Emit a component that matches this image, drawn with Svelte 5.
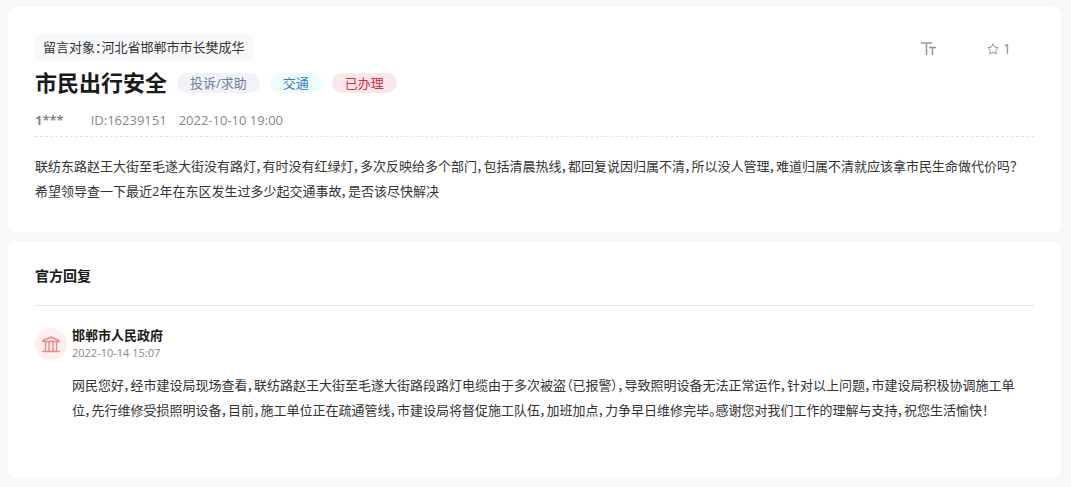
<script>
  const message = {
    target: '河北省邯郸市市长樊成华',
    title: '市民出行安全',
    author: '1***',
    id: '16239151',
    time: '2022-10-10 19:00',
    stars: 1,
    tags: [
      { name: '投诉/求助', type: 'kind' },
      { name: '交通', type: 'field' },
      { name: '已办理', type: 'state' }
    ],
    content: [
      '联纺东路赵王大街至毛遂大街没有路灯，有时没有红绿灯，多次反映给多个部门，包括清晨热线，都回复说因归属不清，所以没人管理，难道归属不清就应该拿市民生命做代价吗？',
      '希望领导查一下最近2年在东区发生过多少起交通事故，是否该尽快解决'
    ]
  };

  const reply = {
    name: '邯郸市人民政府',
    time: '2022-10-14 15:07',
    content: [
      '网民您好，经市建设局现场查看，联纺路赵王大街至毛遂大街路段路灯电缆由于多次被盗（已报警），导致照明设备无法正常运作，针对以上问题，市建设局积极协调施工单',
      '位，先行维修受损照明设备，目前，施工单位正在疏通管线，市建设局将督促施工队伍，加班加点，力争早日维修完毕。感谢您对我们工作的理解与支持，祝您生活愉快！'
    ]
  };
</script>

<main>
  <article class="card">
    <div class="top">
      <p class="target">留言对象：{message.target}</p>
      <div class="actions">
        <button aria-label="字体大小">
          <svg width="15" height="14" viewBox="0 0 15 14" stroke-width="1.5">
            <path d="M0 1H11M5.500 1V13M8 5.500H15M11.500 5.500V13" />
          </svg>
        </button>
        <button aria-label="收藏">
          <svg width="12" height="12" viewBox="0 0 12 12">
            <path
              d="M6 .8L7.600 4.100L11.300 4.600L8.700 7.200L9.300 11L6 9.200L2.700 11L3.300 7.200L.7 4.600L4.400 4.100Z" />
          </svg>
          <span>{message.stars}</span>
        </button>
      </div>
    </div>
    <div class="heading">
      <h1>{message.title}</h1>
      {#each message.tags as tag}
        <span class="tag {tag.type}">{tag.name}</span>
      {/each}
    </div>
    <div class="meta">
      <b>{message.author}</b>
      <span class="id">ID:{message.id}</span>
      <time>{message.time}</time>
    </div>
    <div class="content">
      {#each message.content as line}
        <p>{line}</p>
      {/each}
    </div>
  </article>

  <section class="card reply">
    <h2>官方回复</h2>
    <div class="reply-item">
      <div class="avatar">
        <svg width="18" height="17" viewBox="0 0 18 17" stroke-width="1.4">
          <path d="M1 4.500L9 1L17 4.500V5.500H1ZM3.500 6V15M7 6V15M11 6V15M14.500 6V15M0 15.500H18" />
        </svg>
      </div>
      <div class="reply-body">
        <h3>{reply.name}</h3>
        <time>{reply.time}</time>
        <div class="content">
          {#each reply.content as line}
            <p>{line}</p>
          {/each}
        </div>
      </div>
    </div>
  </section>
</main>

<style>
  :global(body) {
    background: #f7f8fa;
  }

  main {
    display: grid;
    gap: 9px;
    padding: 7px 10px 9px 8px;
    font-family: 'Open Sans', 'Noto Sans CJK SC', sans-serif;
    font-size: 13px;
    font-feature-settings: 'palt';
    color: #333;
  }

  h1,
  h2,
  h3,
  p {
    margin: 0;
  }

  .card {
    padding: 27px;
    border-radius: 8px;
    background: #fff;
  }

  .top {
    display: flex;
    justify-content: space-between;
  }

  .target {
    padding: 0 8px;
    border-radius: 2px;
    background: #f7f8fa;
    line-height: 27px;
  }

  .actions {
    display: flex;
    align-items: center;
    gap: 51px;
    padding: 3px 23px 0 0;
  }

  button {
    display: flex;
    align-items: center;
    gap: 4px;
    padding: 0;
    border: 0;
    background: none;
    color: #888;
    font: inherit;
    font-size: 14px;
    line-height: 20px;
    cursor: pointer;
  }

  svg {
    fill: none;
    stroke: #8f98a3;
  }

  .heading {
    display: flex;
    align-items: center;
    gap: 10px;
    height: 44px;
  }

  h1 {
    padding-bottom: 2px;
    font-size: 22px;
    line-height: 42px;
    color: #1a1a1a;
  }

  .tag {
    padding: 0 13px;
    border-radius: 10px;
    line-height: 20px;
  }

  .kind {
    background: #f0f3fa;
    color: #6f7f99;
  }

  .field {
    background: #edfdfb;
    color: #3b76c4;
  }

  .state {
    background: #fbe8eb;
    color: #d9283f;
  }

  .meta {
    display: flex;
    gap: 12px;
    border-bottom: 1px dashed #e3e3e3;
    line-height: 31px;
    color: #888;
  }

  .id {
    margin-left: 15px;
  }

  .content {
    line-height: 25px;
  }

  .card > .content {
    padding: 17px 0 1px;
  }

  .reply {
    padding: 21px 27px 54px;
  }

  h2 {
    padding-bottom: 15px;
    border-bottom: 1px solid #e3e3e3;
    font-size: 14px;
    line-height: 28px;
    color: #1a1a1a;
  }

  .reply-item {
    display: flex;
    gap: 5px;
    padding-top: 20px;
  }

  .avatar {
    display: flex;
    flex-shrink: 0;
    align-items: center;
    justify-content: center;
    width: 32px;
    height: 32px;
    margin-top: 2px;
    border-radius: 50%;
    background: #ffeeee;
  }

  .avatar svg {
    stroke: #e88a8a;
  }

  h3 {
    font-size: 13px;
    line-height: 18px;
    color: #1a1a1a;
  }

  .reply time {
    display: block;
    font-size: 11px;
    line-height: 18px;
    color: #888;
  }

  .reply .content {
    padding: 11px 0 1px;
  }
</style>
